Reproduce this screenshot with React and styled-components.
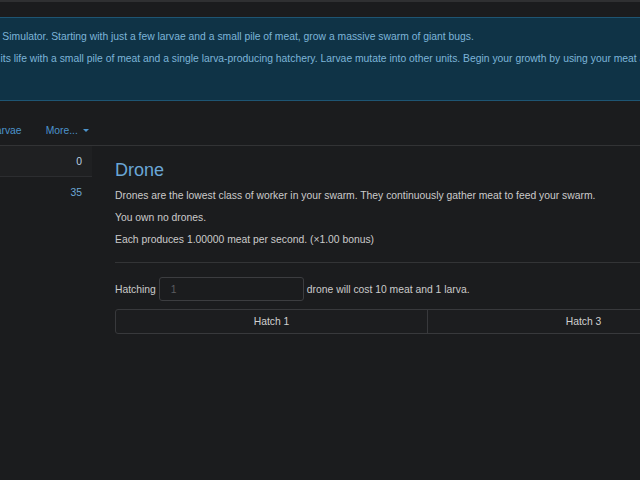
import React from 'react';
import styled, {createGlobalStyle} from 'styled-components';

const Global = createGlobalStyle`
    body {
        margin: 0;
        background: #1b1c1e;
        overflow: hidden;
        font-family: "Liberation Sans", Arial, sans-serif;
        font-size: 10.35px;
        line-height: 15px;
        color: #cbcbcb;
    }
`;

const Page = styled.div`
    width: 1100px;
    margin-left: -115px;
    border-top: 2px solid #2f3032;
    padding-top: 15px;
`;

const Alert = styled.div`
    background: #0f3346;
    border: 1px solid #1e5573;
    border-radius: 3px;
    color: #7db5d9;
    padding: 11px 0 27px 24px;
    p {
        margin: 0 0 7px 0;
        white-space: nowrap;
    }
`;

const Tabs = styled.ul`
    list-style: none;
    margin: 22px 0 0 0;
    padding: 0 0 0 46px;
    display: flex;
    border-bottom: 1px solid #323335;
    height: 22px;
`;

const Tab = styled.li`
    padding: 0 12px;
    color: #4c93cc;
    display: flex;
    align-items: flex-start;
    gap: 5px;
`;

const Caret = styled.span`
    width: 0;
    height: 0;
    margin-top: 6px;
    border-left: 3px solid transparent;
    border-right: 3px solid transparent;
    border-top: 3px solid #4c93cc;
`;

const Body = styled.div`
    display: flex;
    gap: 23px;
`;

const Sidebar = styled.div`
    width: 207px;
    flex-shrink: 0;
`;

const SideRow = styled.div`
    height: 30px;
    display: flex;
    align-items: center;
    justify-content: flex-end;
    padding-right: 10px;
    color: ${p => (p.$active ? '#b9cfe0' : '#6ea8d6')};
    background: ${p => (p.$active ? '#1f2022' : 'transparent')};
    border-bottom: 1px solid ${p => (p.$active ? '#2c2d30' : 'transparent')};
`;

const Content = styled.div`
    flex: 1;
    min-width: 0;
    padding-top: 13px;
`;

const Title = styled.h2`
    margin: 0 0 7px 0;
    font-size: 18px;
    line-height: 22px;
    font-weight: normal;
    color: #6aa6d6;
`;

const Para = styled.p`
    margin: 0 0 7px 0;
    white-space: nowrap;
`;

const Rule = styled.hr`
    border: 0;
    border-top: 1px solid #333436;
    margin: 15px 0 14px 0;
`;

const HatchRow = styled.div`
    display: flex;
    align-items: center;
    gap: 3px;
`;

const Input = styled.input`
    width: 145px;
    height: 24px;
    box-sizing: border-box;
    background: #1b1c1e;
    border: 1px solid #3c3d40;
    border-radius: 3px;
    color: #666;
    font: inherit;
    padding: 0 11px;
    &::placeholder {
        color: #5a5b5e;
    }
`;

const Buttons = styled.div`
    display: flex;
    margin-top: 8px;
`;

const Button = styled.button`
    width: 313px;
    flex-shrink: 0;
    height: 25px;
    background: #1c1d1f;
    border: 1px solid #38393c;
    margin-left: -1px;
    border-radius: ${p => (p.$first ? '3px 0 0 3px' : '0')};
    color: #d0d0d0;
    font: inherit;
    &:first-child {
        margin-left: 0;
    }
`;

const App = () => (
    <>
        <Global />
        <Page>
            <Alert>
                <p>Welcome to Swarm Simulator. Starting with just a few larvae and a small pile of meat, grow a massive swarm of giant bugs.</p>
                <p>Your swarm begins its life with a small pile of meat and a single larva-producing hatchery. Larvae mutate into other units. Begin your growth by using your meat and larvae to hatch some drones.</p>
            </Alert>
            <Tabs>
                <Tab>Meat</Tab>
                <Tab>Larvae</Tab>
                <Tab>More... <Caret /></Tab>
            </Tabs>
            <Body>
                <Sidebar>
                    <SideRow $active>0</SideRow>
                    <SideRow>35</SideRow>
                </Sidebar>
                <Content>
                    <Title>Drone</Title>
                    <Para>Drones are the lowest class of worker in your swarm. They continuously gather meat to feed your swarm.</Para>
                    <Para>You own no drones.</Para>
                    <Para>Each produces 1.00000 meat per second. (×1.00 bonus)</Para>
                    <Rule />
                    <HatchRow>
                        Hatching <Input placeholder="1" /> drone will cost 10 meat and 1 larva.
                    </HatchRow>
                    <Buttons>
                        <Button $first>Hatch 1</Button>
                        <Button>Hatch 3</Button>
                        <Button>Hatch 10</Button>
                    </Buttons>
                </Content>
            </Body>
        </Page>
    </>
);

export default App;
